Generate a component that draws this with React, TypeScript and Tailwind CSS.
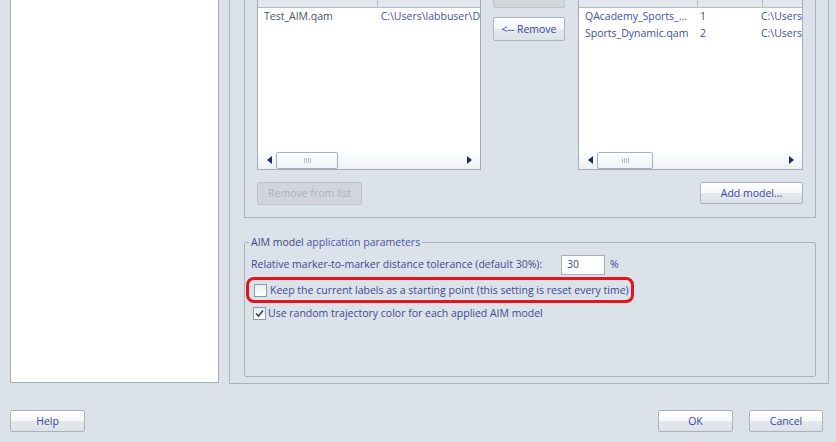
import clsx from "clsx";

function Btn({
  children,
  className,
  disabled,
}: {
  children: React.ReactNode;
  className?: string;
  disabled?: boolean;
}) {
  return (
    <div
      className={clsx(
        "flex items-center justify-center rounded-[2px] border text-[10.5px] whitespace-nowrap overflow-hidden",
        disabled
          ? "border-[#bcc2ca] bg-[#d2d6dc] text-[#aab0c6]"
          : "border-[#a9b2bf] bg-[linear-gradient(#ffffff_0%,#f7f8fa_48%,#e4e8ee_52%,#dde2e9_100%)] text-[#3845a3]",
        className
      )}
    >
      {children}
    </div>
  );
}

function Arrow({ dir }: { dir: "l" | "r" }) {
  return (
    <svg width="5" height="8" viewBox="0 0 5 8">
      {dir === "l" ? (
        <path d="M5 0 L0 4 L5 8 Z" fill="#1d2b66" />
      ) : (
        <path d="M0 0 L5 4 L0 8 Z" fill="#1d2b66" />
      )}
    </svg>
  );
}

function HScroll({ thumb }: { thumb: number }) {
  return (
    <div className="h-[18px] flex items-center bg-[linear-gradient(#ffffff,#eef1f5)] pl-[9px] pr-[8px]">
      <Arrow dir="l" />
      <div
        className="ml-[4px] h-[17px] rounded-[2px] border border-[#a7b0bd] bg-[linear-gradient(#ffffff,#eef1f6)] flex items-center justify-center"
        style={{ width: thumb }}
      >
        <div className="flex gap-[1px]">
          <span className="w-px h-[5px] bg-[#b8bfca]" />
          <span className="w-px h-[5px] bg-[#b8bfca]" />
          <span className="w-px h-[5px] bg-[#b8bfca]" />
          <span className="w-px h-[5px] bg-[#b8bfca]" />
        </div>
      </div>
      <div className="flex-1" />
      <Arrow dir="r" />
    </div>
  );
}

function Check({ checked }: { checked?: boolean }) {
  return (
    <div className="w-[13px] h-[13px] border border-[#8e98a7] bg-[linear-gradient(#e9edf2,#ffffff)] flex items-center justify-center shrink-0">
      {checked && (
        <svg width="9" height="9" viewBox="0 0 9 9">
          <path d="M1 4.5 L3.5 7 L8 1.5" stroke="#3a4150" strokeWidth="1.6" fill="none" />
        </svg>
      )}
    </div>
  );
}

export default function App() {
  return (
    <div className="w-[836px] h-[442px] overflow-hidden bg-[#dce2ea] font-['Open_Sans',sans-serif] text-[10.5px] leading-none">
      <div className="flex h-[384px]">
        {/* left white panel */}
        <div className="ml-[10px] w-[209px] h-[383px] bg-white border-x border-b border-[#a3abb5]" />

        {/* right panel */}
        <div className="ml-[10px] w-[600px] h-[384px] border-x border-b border-[#a9b1bb] pl-[14px]">
          {/* top group */}
          <div className="w-[572px] border-x border-b border-[#aab2bc] pl-[12px] pb-[12px]">
            <div className="flex h-[170px]">
              {/* left list */}
              <div className="w-[224px] h-[170px] bg-white border-x border-b border-[#a3acb8] flex flex-col">
                <div className="h-[8px] flex border-b border-[#b4bcc7] bg-[#e3e8ef]">
                  <div className="w-[120px] border-r border-[#b4bcc7]" />
                </div>
                <div className="flex-1 text-[#4b5263]">
                  <div className="h-[17px] flex items-center whitespace-nowrap overflow-hidden">
                    <span className="w-[121px] pl-[6px]">Test_AIM.qam</span>
                    <span className="pl-[6px] text-[#45509a]">C:\Users\labbuser\D</span>
                  </div>
                </div>
                <HScroll thumb={62} />
              </div>

              {/* middle buttons */}
              <div className="ml-[12px] w-[72px] flex flex-col">
                <Btn disabled className="h-[23px] mt-[-15px]">
                  Add --&gt;
                </Btn>
                <Btn className="h-[24px] mt-[9px]">&lt;-- Remove</Btn>
              </div>

              {/* right list */}
              <div className="ml-[13px] w-[225px] h-[170px] bg-white border-x border-b border-[#a3acb8] flex flex-col">
                <div className="h-[8px] flex border-b border-[#b4bcc7] bg-[#e3e8ef]">
                  <div className="w-[119px] border-r border-[#b4bcc7]" />
                  <div className="w-[65px] border-r border-[#b4bcc7]" />
                </div>
                <div className="flex-1 text-[#3e4ea3]">
                  <div className="h-[17px] flex items-center whitespace-nowrap overflow-hidden">
                    <span className="w-[120px] pl-[6px]">QAcademy_Sports_...</span>
                    <span className="w-[65px] pl-[7px]">1</span>
                    <span className="pl-[6px]">C:\Users</span>
                  </div>
                  <div className="h-[17px] flex items-center whitespace-nowrap overflow-hidden">
                    <span className="w-[120px] pl-[6px]">Sports_Dynamic.qam</span>
                    <span className="w-[65px] pl-[7px]">2</span>
                    <span className="pl-[6px]">C:\Users</span>
                  </div>
                </div>
                <HScroll thumb={56} />
              </div>
            </div>

            <div className="flex mt-[12px] h-[23px]">
              <Btn disabled className="w-[105px] h-[23px]">
                Remove from list
              </Btn>
              <div className="flex-1" />
              <Btn className="w-[103px] h-[22px] mr-[12px]">Add model...</Btn>
            </div>
          </div>

          {/* AIM parameters */}
          <fieldset className="mt-[17px] w-[572px] h-[142px] border border-[#aab2bc] rounded-[2px] pl-[6px]">
            <legend className="ml-[-2px] px-[2px] text-[#3b4780] leading-[14px]">
              AIM model <span className="text-[#4556aa]">application parameters</span>
            </legend>
            <div className="mt-[5px] h-[21px] flex items-center text-[#3b4a8f]">
              <span className="w-[310px]">Relative marker-to-marker distance tolerance (default 30%):</span>
              <div className="w-[44px] h-[20px] bg-white border border-[#a6afbb] flex items-center pl-[5px] text-[#3b4a8f]">
                30
              </div>
              <span className="ml-[5px]">%</span>
            </div>
            <div className="mt-[2px] ml-[-5px] w-[388px] h-[26px] border-[3px] border-[#e3141c] rounded-[8px] flex items-center pl-[5px] text-[#3b4a8f]">
              <Check />
              <span className="ml-[3px] whitespace-nowrap">
                Keep the current labels as a starting point (this setting is reset every time)
              </span>
            </div>
            <div className="mt-[3px] ml-[2px] h-[14px] flex items-center text-[#3b4a8f]">
              <Check checked />
              <span className="ml-[2px] whitespace-nowrap">
                Use random trajectory color for each applied AIM model
              </span>
            </div>
          </fieldset>
        </div>
      </div>

      {/* bottom buttons */}
      <div className="flex mt-[26px] h-[22px]">
        <Btn className="ml-[10px] w-[75px] h-[22px]">Help</Btn>
        <div className="flex-1" />
        <Btn className="w-[75px] h-[22px]">OK</Btn>
        <Btn className="ml-[16px] mr-[13px] w-[74px] h-[22px]">Cancel</Btn>
      </div>
    </div>
  );
}
